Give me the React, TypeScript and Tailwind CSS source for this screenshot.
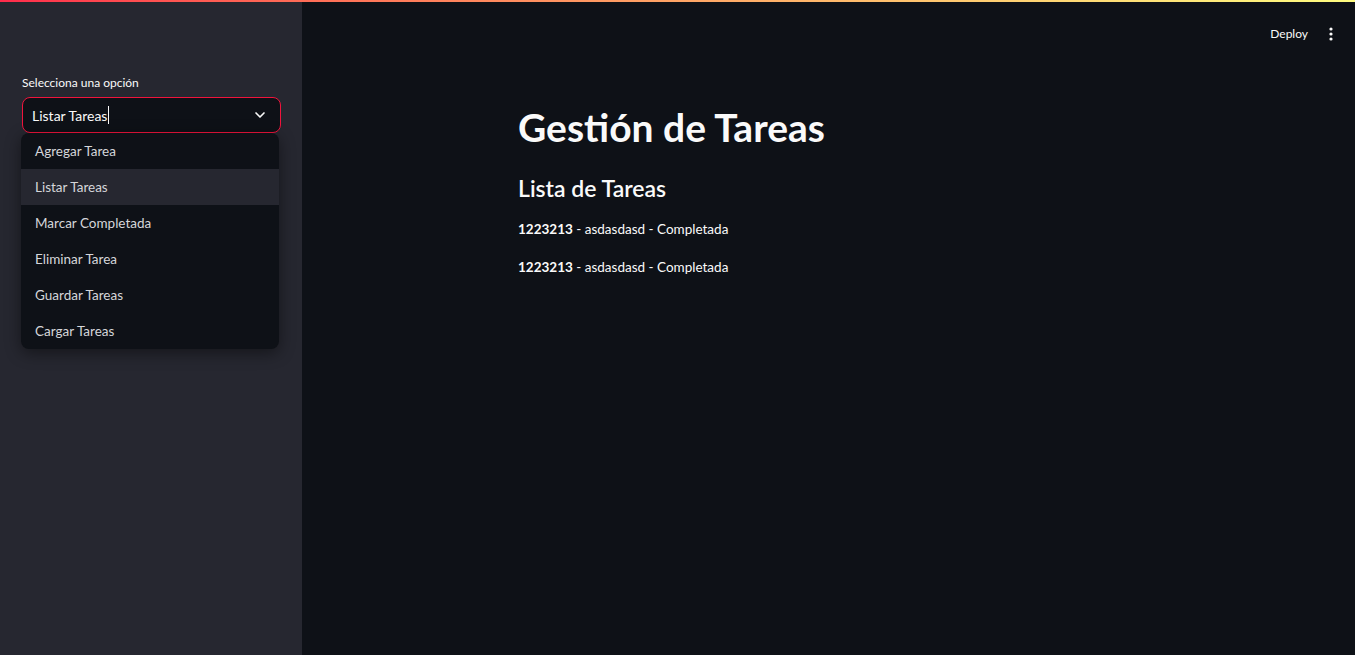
import { ChevronDown } from "lucide-react";

const options = [
  "Agregar Tarea",
  "Listar Tareas",
  "Marcar Completada",
  "Eliminar Tarea",
  "Guardar Tareas",
  "Cargar Tareas",
];

const tasks = [
  { id: "1223213", name: "asdasdasd", status: "Completada" },
  { id: "1223213", name: "asdasdasd", status: "Completada" },
];

function Sidebar() {
  return (
    <aside className="w-[302px] shrink-0 bg-[#262730] px-[21px] pt-[72px]">
      <label className="block pl-px text-[12px] text-[#fafafa]">Selecciona una opción</label>
      <div className="mt-[5px] ml-px flex h-[36px] w-[259px] items-center justify-between rounded-lg border border-[#f0143c] bg-[#0e1117] pl-[9px] pr-[12px]">
        <span className="flex items-center text-[14px] text-[#fafafa]">
          Listar Tareas
          <span className="ml-px inline-block h-[18px] w-px bg-[#fafafa]" />
        </span>
        <ChevronDown size={16} strokeWidth={2.5} className="text-[#fafafa]" />
      </div>
      <ul className="w-[258px] overflow-hidden rounded-lg bg-[#0e1117] shadow-[0_4px_16px_rgba(0,0,0,0.45)]">
        {options.map((opt, i) => (
          <li
            key={opt}
            className={`flex h-[36px] items-center pl-[14px] text-[13.5px] text-[#d5d6da] ${
              i === 1 ? "bg-[#262730]" : ""
            }`}
          >
            {opt}
          </li>
        ))}
      </ul>
    </aside>
  );
}

export default function App() {
  return (
    <div
      className="flex h-[655px] w-full flex-col overflow-hidden bg-[#0e1117]"
      style={{ fontFamily: "'Source Sans Pro', Lato, 'Noto Sans', sans-serif" }}
    >
      <div className="h-[2px] w-full shrink-0 bg-gradient-to-r from-[#ff2b4b] to-[#fffd80]" />
      <div className="flex flex-1">
        <Sidebar />
        <main className="flex flex-1 flex-col">
          <header className="flex h-[60px] items-center justify-end gap-[21px] pr-[22px] pt-[3px]">
            <span className="text-[12px] text-[#fafafa]">Deploy</span>
            <svg width="4" height="14" viewBox="0 0 4 14" className="text-[#fafafa]">
              <circle cx="2" cy="2" r="1.6" fill="currentColor" />
              <circle cx="2" cy="7" r="1.6" fill="currentColor" />
              <circle cx="2" cy="12" r="1.6" fill="currentColor" />
            </svg>
          </header>
          <div className="mx-auto w-[621px] pt-[41px] text-[#fafafa]">
            <h1 className="text-[39px] font-bold leading-[48px]">Gestión de Tareas</h1>
            <h2 className="mt-[21px] text-[23px] font-semibold leading-[32px]">Lista de Tareas</h2>
            <div className="mt-[15px] flex flex-col gap-[18px] text-[13.5px] leading-[20px]">
              {tasks.map((t, i) => (
                <p key={i}>
                  <span className="font-bold">{t.id}</span> - {t.name} - {t.status}
                </p>
              ))}
            </div>
          </div>
        </main>
      </div>
    </div>
  );
}
